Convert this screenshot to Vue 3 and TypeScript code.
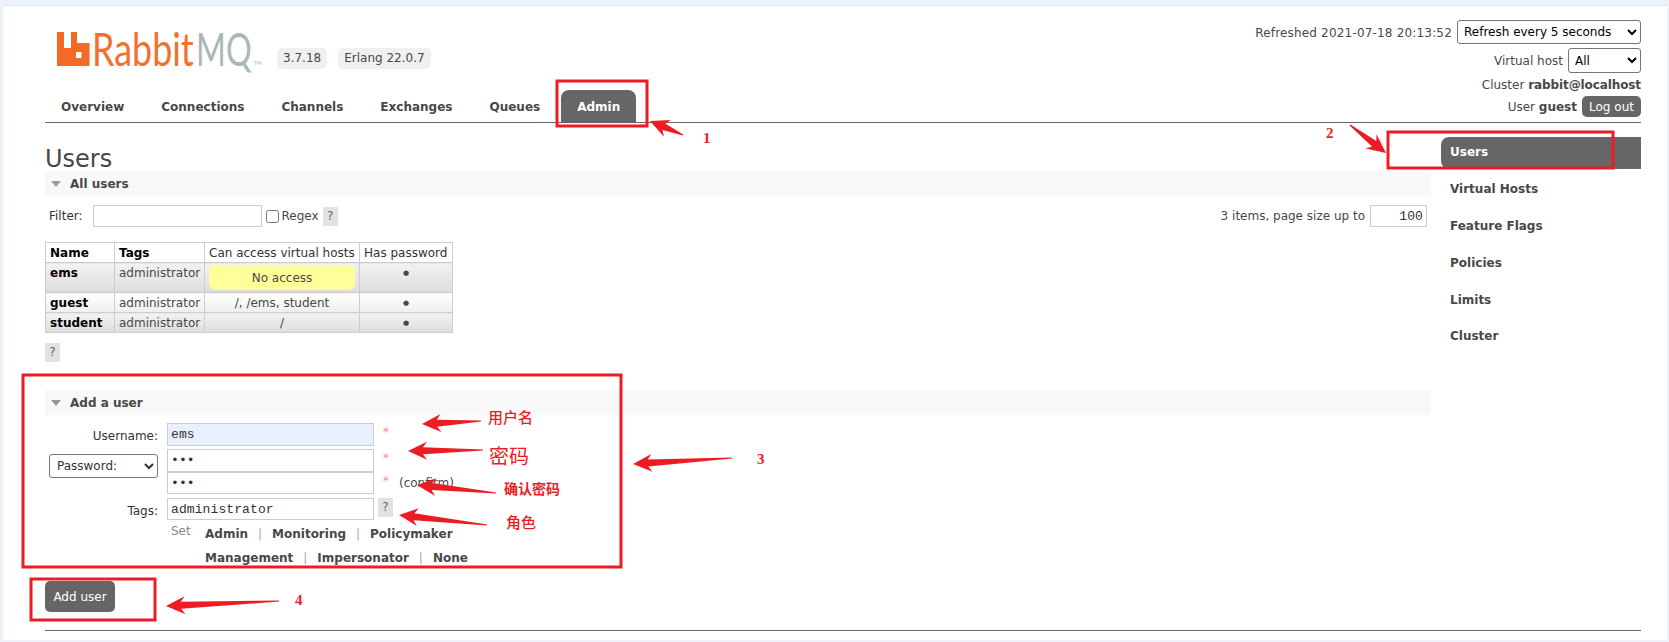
<script setup lang="ts">
interface Arrow {
  tip: [number, number]
  tail: [number, number]
}

const tabs = ['Overview', 'Connections', 'Channels', 'Exchanges', 'Queues', 'Admin']
const sideLinks = ['Users', 'Virtual Hosts', 'Feature Flags', 'Policies', 'Limits', 'Cluster']

const users = [
  { name: 'ems', hosts: 'No access', noAccess: true, alt: true },
  { name: 'guest', hosts: '/, /ems, student', noAccess: false, alt: false },
  { name: 'student', hosts: '/', noAccess: false, alt: true },
]

const tagRows = [
  ['Admin', 'Monitoring', 'Policymaker'],
  ['Management', 'Impersonator', 'None'],
]

// annotations somebody painted over the screenshot
const boxes = [
  { x: 557, y: 81, w: 90, h: 45 },
  { x: 1388, y: 132, w: 225, h: 36 },
  { x: 23, y: 375, w: 598, h: 192 },
  { x: 31, y: 579, w: 124, h: 41 },
]

const arrows: Arrow[] = [
  { tip: [650, 121], tail: [683, 135] },
  { tip: [1386, 153], tail: [1350, 125] },
  { tip: [633, 464], tail: [732, 458] },
  { tip: [422, 424], tail: [481, 421] },
  { tip: [408, 451], tail: [483, 450] },
  { tip: [417, 485], tail: [496, 493] },
  { tip: [399, 515], tail: [487, 525] },
  { tip: [166, 606], tail: [279, 601] },
]

function arrowPoints(a: Arrow): string {
  const [tx, ty] = a.tip
  const dx = a.tail[0] - tx
  const dy = a.tail[1] - ty
  const len = Math.hypot(dx, dy)
  const ux = dx / len
  const uy = dy / len
  const head = Math.min(19, len * 0.55)
  const at = (along: number, side: number) =>
    `${(tx + ux * along - uy * side).toFixed(1)},${(ty + uy * along + ux * side).toFixed(1)}`
  return [
    at(0, 0),
    at(head, 9),
    at(head - 4, 3.5),
    at(len, 0.6),
    at(len, -0.6),
    at(head - 4, -3.5),
    at(head, -9),
  ].join(' ')
}
</script>

<template>
  <div class="screen">
    <div class="page">
      <header class="top">
        <div class="top-left">
          <div class="brand">
            <svg class="logo" width="206" height="37" viewBox="0 0 206 37">
              <path
                fill="#f26a24"
                fill-rule="evenodd"
                d="M0 0H7V16H14V0H20V11H32.5V34H0ZM19 20V26H24.5V20Z"
              />
              <text class="logo-text" transform="translate(35 33.5) scale(.78 1)" fill="#f2702c">Rabbit</text>
              <text class="logo-text" transform="translate(139 33.5) scale(.7 1)" fill="#a9b9b2">MQ</text>
              <text class="logo-tm" x="197" y="33" fill="#a9b9b2">TM</text>
            </svg>
            <span class="badge first">3.7.18</span>
            <span class="badge">Erlang 22.0.7</span>
          </div>
          <nav class="tabs">
            <a v-for="tab in tabs" :key="tab" class="tab" :class="{ active: tab === 'Admin' }">{{ tab }}</a>
          </nav>
        </div>
        <div class="status">
          <div class="status-row first">
            <span class="refreshed">Refreshed 2021-07-18 20:13:52</span>
            <select class="refresh"><option>Refresh every 5 seconds</option></select>
          </div>
          <div class="status-row second">
            <span>Virtual host</span>
            <select class="vhost"><option>All</option></select>
          </div>
          <div class="status-row cluster">Cluster&nbsp;<b>rabbit@localhost</b></div>
          <div class="status-row user">
            <span>User <b>guest</b></span>
            <button class="logout">Log out</button>
          </div>
        </div>
      </header>

      <div class="main">
        <section class="content">
          <h1>Users</h1>
          <div class="section-head"><i class="triangle"></i>All users</div>
          <div class="filter">
            <div class="filter-left">
              <label>Filter:</label>
              <input class="filter-input" type="text" />
              <input class="check" type="checkbox" />
              <span class="regex">Regex</span>
              <span class="help">?</span>
            </div>
            <div class="filter-right">
              <span>3 items, page size up to</span>
              <input class="page-size" type="text" value="100" />
            </div>
          </div>

          <table class="list">
            <thead>
              <tr>
                <th class="strong c1">Name</th>
                <th class="strong c2">Tags</th>
                <th class="c3">Can access virtual hosts</th>
                <th class="c4">Has password</th>
              </tr>
            </thead>
            <tbody>
              <tr v-for="u in users" :key="u.name" :class="u.alt ? 'alt1' : 'alt2'">
                <td class="name">{{ u.name }}</td>
                <td>administrator</td>
                <td class="center">
                  <div v-if="u.noAccess" class="warning">No access</div>
                  <template v-else>{{ u.hosts }}</template>
                </td>
                <td class="center dot">●</td>
              </tr>
            </tbody>
          </table>
          <span class="help table-help">?</span>

          <div class="section-head add-head"><i class="triangle"></i>Add a user</div>
          <form class="form" @submit.prevent>
            <label class="label">Username:</label>
            <input class="field filled" type="text" value="ems" />
            <span class="star">*</span>

            <select class="pw-select"><option>Password:</option></select>
            <input class="field pw" type="password" value="ems" />
            <span class="star">*</span>

            <input class="field pw confirm" type="password" value="ems" />
            <span class="star">*<span class="confirm-note">(confirm)</span></span>

            <label class="label tags-label">Tags:</label>
            <input class="field tags" type="text" value="administrator" />
            <span class="help tags-help">?</span>

            <div class="set-row">
              <span class="set">Set</span>
              <div class="tag-links">
                <div v-for="(row, i) in tagRows" :key="i" class="tag-row">
                  <template v-for="(tag, j) in row" :key="tag">
                    <span v-if="j > 0" class="sep">|</span>
                    <a class="tag-link">{{ tag }}</a>
                  </template>
                </div>
              </div>
            </div>
          </form>
          <button class="add-btn">Add user</button>
        </section>

        <aside class="side">
          <a v-for="link in sideLinks" :key="link" class="side-link" :class="{ active: link === 'Users' }">{{ link }}</a>
        </aside>
      </div>
      <div class="foot-line"></div>
    </div>

    <svg class="marks" width="1669" height="642" viewBox="0 0 1669 642">
      <rect
        v-for="(b, i) in boxes"
        :key="i"
        :x="b.x"
        :y="b.y"
        :width="b.w"
        :height="b.h"
        fill="none"
        stroke="#ed1c24"
        stroke-width="3"
      />
      <polygon v-for="(a, i) in arrows" :key="i" :points="arrowPoints(a)" fill="#ed1c24" />
      <text class="num" x="703" y="143">1</text>
      <text class="num" x="1326" y="138">2</text>
      <text class="num" x="757" y="464">3</text>
      <text class="num" x="295" y="605">4</text>
      <text class="note" x="488" y="423" font-size="15">用户名</text>
      <text class="note serif" x="489" y="464" font-size="20">密码</text>
      <text class="note bold" x="504" y="494" font-size="14">确认密码</text>
      <text class="note" x="506" y="528" font-size="15">角色</text>
    </svg>
  </div>
</template>

<style scoped>
.screen {
  position: relative;
  width: 1669px;
  height: 642px;
  overflow: hidden;
  font-family: 'DejaVu Sans', Verdana, sans-serif;
  font-size: 12px;
  color: #484848;
}

.page {
  box-sizing: border-box;
  height: 635px;
  margin: 5px 2px 0 3px;
  padding: 0 26px 0 42px;
  background: #fff;
  border-top: 1px solid #dfe3ea;
}

.top {
  display: flex;
  justify-content: space-between;
  height: 116px;
  border-bottom: 1px solid #666;
}

.top-left {
  display: flex;
  flex-direction: column;
  justify-content: space-between;
}

.brand {
  display: flex;
  align-items: flex-end;
  padding: 26px 0 0 12px;
}

.logo {
  overflow: visible;
}

.logo-text {
  font-family: Lato, 'Open Sans', sans-serif;
  font-weight: 400;
  font-size: 46px;
}

.logo-tm {
  font-family: 'DejaVu Sans', sans-serif;
  font-size: 5px;
}

.badge {
  height: 21px;
  line-height: 21px;
  margin-left: 11px;
  padding: 0 6px;
  border-radius: 5px;
  background: #f0f0f0;
}

.badge.first {
  margin-left: 14px;
}

.tabs {
  display: flex;
  gap: 5px;
}

.tab {
  height: 32px;
  line-height: 34px;
  padding: 0 16px;
  border-radius: 8px 8px 0 0;
  font-weight: bold;
}

.tab.active {
  background: #666;
  color: #fff;
}

.status {
  display: flex;
  flex-direction: column;
  align-items: flex-end;
  padding-top: 14px;
}

.status-row {
  display: flex;
  align-items: center;
  gap: 5px;
}

.refreshed {
  letter-spacing: 0.18px;
  padding-top: 2px;
}

.status-row.second {
  margin-top: 4px;
}

.status-row.cluster {
  display: block;
  height: 14px;
  line-height: 16px;
  margin-top: 4px;
}

.status-row.cluster b {
  letter-spacing: -0.1px;
}

.status-row.user {
  margin-top: 5px;
}

.status select {
  font-family: inherit;
  font-size: 12px;
  color: #000;
  background: #fff;
  border: 1px solid #767676;
  border-radius: 3px;
  padding: 0 2px;
}

.refresh {
  width: 184px;
  height: 24px;
}

.vhost {
  width: 73px;
  height: 25px;
}

.logout,
.add-btn {
  border: 0;
  background: #666;
  color: #fff;
  font-family: inherit;
  font-size: 12px;
  border-radius: 5px;
  padding: 0;
}

.logout {
  width: 59px;
  height: 21px;
}

.main {
  display: flex;
  gap: 10px;
}

.content {
  width: 1386px;
}

h1 {
  margin: 24px 0 0;
  font-size: 24px;
  line-height: 24px;
  font-weight: normal;
}

.section-head {
  display: flex;
  align-items: center;
  height: 25px;
  background: #f8f8f8;
  font-weight: bold;
}

.triangle {
  width: 0;
  height: 0;
  margin: 1px 9px 0 6px;
  border-left: 5.5px solid transparent;
  border-right: 5.5px solid transparent;
  border-top: 6px solid #999;
}

.filter {
  display: flex;
  justify-content: space-between;
  align-items: center;
  margin-top: 8px;
  padding: 0 4px;
  height: 24px;
}

.filter-left,
.filter-right {
  display: flex;
  align-items: center;
}

.filter-left label {
  color: #333;
}

input {
  box-sizing: border-box;
  margin: 0;
  border: 1px solid #ccc;
  outline: 0;
  font-family: 'Liberation Mono', monospace;
  font-size: 13px;
  letter-spacing: 0.1px;
  color: #333;
  background: #fff;
}

.filter-input {
  width: 169px;
  height: 22px;
  margin-left: 10px;
}

input.check {
  width: 13px;
  height: 13px;
  margin: 0 3px 0 4px;
}

.regex {
  margin-right: 4px;
}

.help {
  display: inline-block;
  width: 15px;
  height: 19px;
  line-height: 19px;
  text-align: center;
  background: #e2e2e2;
  color: #666;
}

.filter-right span {
  margin-right: 5px;
}

.page-size {
  width: 57px;
  height: 22px;
  padding-right: 3px;
  text-align: right;
}

.list {
  margin-top: 14px;
  border-collapse: collapse;
  border: 1px solid #ccc;
  table-layout: fixed;
  width: 408px;
}

.list th,
.list td {
  border: 1px solid #ccc;
  padding: 1px 4px 0;
  line-height: 18px;
  vertical-align: top;
  white-space: nowrap;
}

.list th {
  font-weight: normal;
  text-align: left;
  color: #333;
  background: #fff;
}

.list th.strong,
.list td.name {
  font-weight: bold;
  color: #000;
}

.c1 { width: 60px; }
.c2 { width: 81px; }
.c3 { width: 146px; }

.alt1 td {
  background: linear-gradient(#f2f2f2, #ddd);
}

.alt2 td {
  background: linear-gradient(#fff, #eee);
}

.list td.center {
  text-align: center;
}

.list td.dot {
  font-size: 7px;
}

.warning {
  height: 25px;
  line-height: 26px;
  margin: 1px 0 2px;
  border-radius: 6px;
  background: #ffff99;
}

.table-help {
  display: block;
  margin-top: 10px;
}

.add-head {
  margin-top: 28px;
}

.form {
  display: grid;
  grid-template-columns: 113px 207px 1fr;
  grid-template-rows: 26px 23px 26px 22px auto;
  column-gap: 9px;
  margin-top: 8px;
}

.label {
  text-align: right;
  line-height: 26px;
  color: #333;
}

.field {
  width: 207px;
  height: 23px;
  padding: 0 3px;
}

.filled {
  background: #e8f0fe;
}

.tags {
  height: 22px;
}

.confirm {
  height: 22px;
}

.star {
  color: #f88;
  line-height: 18px;
  white-space: nowrap;
}

.confirm-note {
  margin-left: 10px;
  position: relative;
  top: 2px;
  color: #484848;
}

.pw-select {
  grid-row: 2 / span 2;
  grid-column: 1;
  box-sizing: border-box;
  justify-self: end;
  width: 109px;
  height: 24px;
  margin-top: 5px;
  padding: 0 3px;
  border: 1px solid #767676;
  border-radius: 3px;
  background: #fff;
  color: #333;
  font-family: inherit;
  font-size: 12px;
  line-height: 26px;
}

.pw {
  grid-column: 2;
}

.tags-label {
  grid-column: 1;
}

.tags-help {
  margin-left: -5px;
}

.set-row {
  grid-column: 2 / -1;
  display: flex;
  padding-left: 4px;
  margin-top: 2px;
}

.set {
  width: 34px;
  margin-top: 2px;
  color: #888;
}

.tag-links {
  font-weight: bold;
}

.tag-row {
  display: flex;
  height: 24px;
  line-height: 24px;
}

.sep {
  width: 24px;
  text-align: center;
  font-weight: normal;
  color: #aaa;
}

.add-btn {
  display: block;
  width: 70px;
  height: 31px;
  margin-top: 11px;
}

.side {
  display: flex;
  flex-direction: column;
  gap: 5px;
  width: 200px;
  margin-top: 14px;
}

.side-link {
  height: 32px;
  line-height: 31px;
  padding-left: 9px;
  border-radius: 8px 0 0 8px;
  font-weight: bold;
}

.side-link:last-child {
  margin-top: -1px;
}

.side-link.active {
  background: #666;
  color: #fff;
}

.foot-line {
  margin-top: 18px;
  border-top: 1px solid #666;
}

.marks {
  position: absolute;
  left: 0;
  top: 0;
  pointer-events: none;
}

.num {
  font-family: 'Liberation Serif', serif;
  font-size: 15px;
  font-weight: bold;
  fill: #ed1c24;
}

.note {
  font-family: 'Noto Sans CJK SC', sans-serif;
  font-weight: 500;
  fill: #ed1c24;
}

.note.bold {
  font-weight: 700;
}

.note.serif {
  font-weight: 400;
}
</style>

<style>
html,
body {
  margin: 0;
  background: #edf2fa;
}
</style>
